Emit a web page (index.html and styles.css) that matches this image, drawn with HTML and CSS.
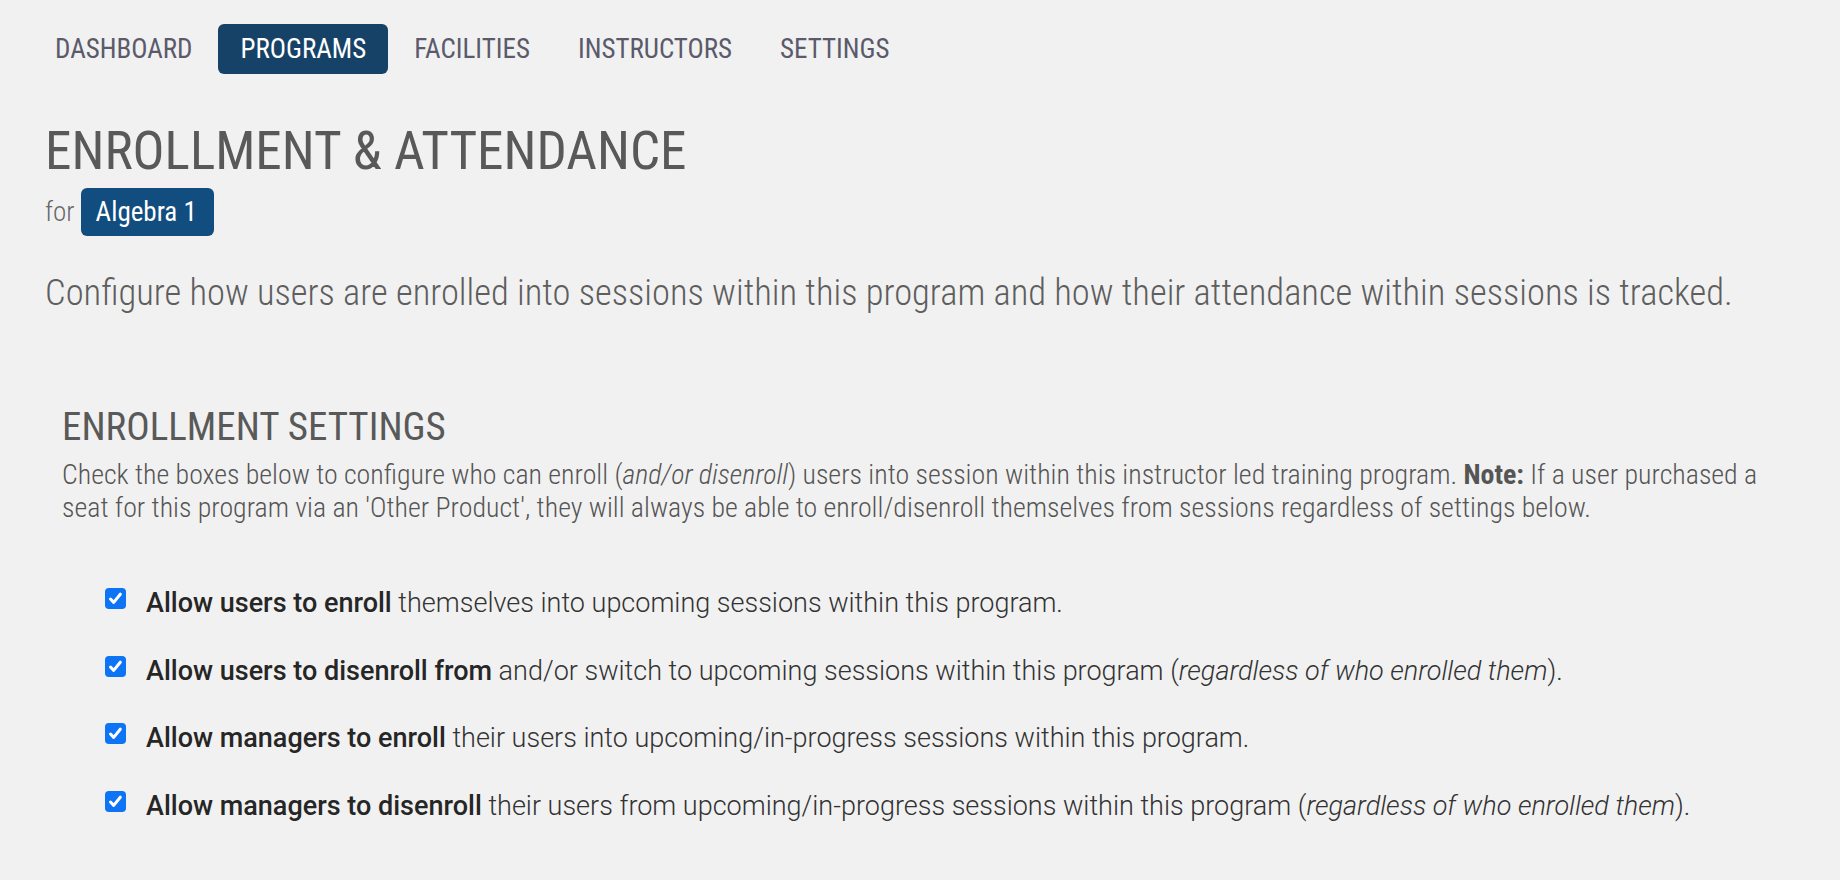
FILE: index.html
```html
<!DOCTYPE html>
<html lang="en">

<head>
    <meta charset="utf-8">
    <title>Enrollment &amp; Attendance</title>
    <link rel="stylesheet" href="styles.css">
</head>

<body>
    <nav class="tabs">
        <a class="tab" href="#">DASHBOARD</a>
        <a class="tab active" href="#">PROGRAMS</a>
        <a class="tab" href="#">FACILITIES</a>
        <a class="tab" href="#">INSTRUCTORS</a>
        <a class="tab" href="#">SETTINGS</a>
    </nav>

    <main class="page">
        <h1 class="page-title">ENROLLMENT &amp; ATTENDANCE</h1>
        <div class="page-for">for <span class="program-badge">Algebra 1</span></div>
        <p class="page-intro">Configure how users are enrolled into sessions within this program and how their attendance within sessions is tracked.</p>

        <section class="settings">
            <h2 class="settings-title">ENROLLMENT SETTINGS</h2>
            <p class="settings-note">Check the boxes below to configure who can enroll (<em>and/or disenroll</em>) users into session within this instructor led training program. <strong>Note:</strong> If a user purchased a seat for this program via an 'Other Product', they will always be able to enroll/disenroll themselves from sessions regardless of settings below.</p>

            <ul class="option-list">
                <li class="option">
                    <input type="checkbox" checked>
                    <span><b>Allow users to enroll</b> themselves into upcoming sessions within this program.</span>
                </li>
                <li class="option">
                    <input type="checkbox" checked>
                    <span><b>Allow users to disenroll from</b> and/or switch to upcoming sessions within this program (<em>regardless of who enrolled them</em>).</span>
                </li>
                <li class="option">
                    <input type="checkbox" checked>
                    <span><b>Allow managers to enroll</b> their users into upcoming/in-progress sessions within this program.</span>
                </li>
                <li class="option">
                    <input type="checkbox" checked>
                    <span><b>Allow managers to disenroll</b> their users from upcoming/in-progress sessions within this program (<em>regardless of who enrolled them</em>).</span>
                </li>
            </ul>
        </section>
    </main>
</body>

</html>
```

FILE: styles.css
```css
body {
    margin: 0;
    padding: 0;
    background-color: #f1f1f1;
    font-family: Roboto, "Noto Sans", sans-serif;
    color: #5b5b5b;
}

/* top tabs */
.tabs {
    display: flex;
    gap: 4px;
    padding: 24px 33px 0;
}

.tab {
    display: block;
    height: 50px;
    line-height: 50px;
    padding: 0 22px;
    border-radius: 6px;
    font-family: "Roboto Condensed", Roboto, sans-serif;
    font-size: 27px;
    color: #5b5a6b;
    text-decoration: none;
}

.tab.active {
    background-color: #174268;
    color: #ffffff;
}

.page {
    padding: 0 60px 0 45px;
}

.page-title {
    margin: 45px 0 0;
    font-family: "Roboto Condensed", Roboto, sans-serif;
    font-size: 53.2px;
    line-height: 64px;
    font-weight: 400;
    color: #595959;
}

.page-for {
    margin-top: 5px;
    font-family: "Roboto Condensed", Roboto, sans-serif;
    font-size: 27px;
    font-weight: 300;
    line-height: 48px;
    color: #666;
}

.program-badge {
    display: inline-block;
    height: 48px;
    padding: 0 17px 0 15px;
    border-radius: 6px;
    background-color: #124d80;
    color: #ffffff;
    font-weight: 400;
    vertical-align: top;
}

.page-intro {
    margin: 36px 0 0;
    font-family: "Roboto Condensed", Roboto, sans-serif;
    font-size: 36.5px;
    line-height: 42px;
    font-weight: 300;
    color: #5e5e5e;
}

.settings {
    margin-top: 89px;
    padding-left: 17px;
}

.settings-title {
    margin: 0;
    font-family: "Roboto Condensed", Roboto, sans-serif;
    font-size: 39px;
    line-height: 48px;
    font-weight: 400;
    color: #595959;
}

.settings-note {
    margin: 7px 0 0;
    font-family: "Roboto Condensed", Roboto, sans-serif;
    font-size: 27.9px;
    line-height: 33px;
    font-weight: 300;
    color: #555;
}

.settings-note strong {
    font-weight: 700;
}

.option-list {
    list-style: none;
    margin: 62px 0 0;
    padding: 0 0 0 43px;
    display: flex;
    flex-direction: column;
    gap: 33.5px;
}

.option {
    display: flex;
    align-items: flex-start;
    gap: 20px;
    font-size: 27px;
    line-height: 34px;
    font-weight: 300;
    color: #333;
}

.option b {
    font-weight: 500;
    color: #262626;
}

.option input {
    appearance: none;
    -webkit-appearance: none;
    flex: none;
    width: 21px;
    height: 21px;
    margin: 2px 0 0;
    border-radius: 4px;
    background-color: #0c74f5;
    background-image: url("data:image/svg+xml,%3Csvg xmlns='http://www.w3.org/2000/svg' viewBox='0 0 21 21'%3E%3Cpath d='M5.5 11l3.2 3.4 6.6-8.2' fill='none' stroke='white' stroke-width='3' stroke-linecap='round' stroke-linejoin='round'/%3E%3C/svg%3E");
    background-size: 100% 100%;
}
```
